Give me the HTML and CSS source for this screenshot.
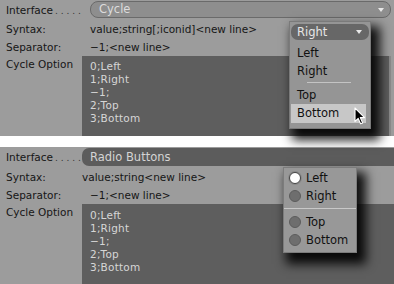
FILE: index.html
```html
<!DOCTYPE html>
<html lang="en">
<head>
<meta charset="utf-8"/>
<title>Cycle Interface</title>
<link rel="stylesheet" href="styles.css">
</head>
<body>
<div class="panel panel-top">
  <div class="row row-interface">
    <div class="label">Interface<span class="dots">. . . . .</span></div>
    <div class="dropdown">Cycle<span class="arrow"></span></div>
  </div>
  <div class="row row-syntax">
    <div class="label">Syntax:</div>
    <div class="value indent">value;string[;iconid]&lt;new line&gt;</div>
  </div>
  <div class="row row-sep">
    <div class="label">Separator:</div>
    <div class="value indent">&minus;1;&lt;new line&gt;</div>
  </div>
  <div class="row row-option">
    <div class="label">Cycle Option</div>
    <div class="textbox textbox-top">0;Left<br>1;Right<br>&minus;1;<br>2;Top<br>3;Bottom</div>
  </div>

  <div class="menu">
    <div class="menu-pill">Right<span class="arrow"></span></div>
    <div class="menu-item">Left</div>
    <div class="menu-item">Right</div>
    <div class="menu-sep"></div>
    <div class="menu-item">Top</div>
    <div class="menu-item menu-item-active">Bottom</div>
    <svg class="cursor" width="12" height="18" viewBox="0 0 12 18">
      <path d="M1 1 L1 14.5 L4.2 11.4 L6.6 16.8 L8.6 15.9 L6.3 10.6 L10.6 10.6 Z" fill="#000" stroke="#fff" stroke-width="1.1" stroke-linejoin="round"/>
    </svg>
  </div>
</div>

<div class="panel panel-bottom">
  <div class="row row-interface-b">
    <div class="label">Interface<span class="dots">. . . . .</span></div>
    <div class="dropdown-dark">Radio Buttons</div>
  </div>
  <div class="row row-syntax">
    <div class="label">Syntax:</div>
    <div class="value">value;string&lt;new line&gt;</div>
  </div>
  <div class="row row-sep">
    <div class="label">Separator:</div>
    <div class="value indent">&minus;1;&lt;new line&gt;</div>
  </div>
  <div class="row row-option">
    <div class="label">Cycle Option</div>
    <div class="textbox textbox-bottom">0;Left<br>1;Right<br>&minus;1;<br>2;Top<br>3;Bottom</div>
  </div>

  <div class="radio-menu">
    <div class="radio-item"><span class="radio radio-on"></span>Left</div>
    <div class="radio-item"><span class="radio"></span>Right</div>
    <div class="radio-sep"></div>
    <div class="radio-item"><span class="radio"></span>Top</div>
    <div class="radio-item"><span class="radio"></span>Bottom</div>
  </div>
</div>
</body>
</html>
```

FILE: styles.css
```css
body {
  margin: 0;
  background: #fff;
  font-family: "DejaVu Sans", sans-serif;
  font-size: 10.5px;
  color: #161616;
}
.panel {
  position: relative;
  background: #9c9c9c;
}
.panel-top {
  height: 136px;
  z-index: 2;
}
.panel-bottom {
  height: 137px;
  margin-top: 11px;
  overflow: hidden;
}
.row {
  display: grid;
  grid-template-columns: 82px 1fr;
  align-items: center;
}
.label {
  padding-left: 6px;
  white-space: nowrap;
}
.dots {
  font-size: 9px;
  margin-left: 2px;
  color: #333;
}
.value {
  white-space: nowrap;
}
.indent {
  padding-left: 8px;
}

/* top panel rows */
.row-interface {
  height: 19px;
}
.row-syntax {
  height: 19px;
}
.row-sep {
  height: 18px;
}
.row-option {
  align-items: start;
}
.row-option .label {
  padding-top: 2px;
}
.dropdown {
  position: relative;
  height: 15px;
  line-height: 15px;
  margin: 0 3px 0 8px;
  padding-left: 8px;
  background: #8e8e8e;
  border: 1px solid #6a6a6a;
  border-radius: 8px;
  color: #dcdcdc;
  font-size: 11.5px;
}
.arrow {
  position: absolute;
  right: 6px;
  top: 6px;
  width: 0;
  height: 0;
  border-left: 3.5px solid transparent;
  border-right: 3.5px solid transparent;
  border-top: 4px solid #e8e8e8;
}
.textbox {
  height: 80px;
  box-sizing: border-box;
  padding: 4px 8px;
  background: #5e5e5e;
  color: #d6d6d6;
  line-height: 13px;
  letter-spacing: 0.2px;
}
.textbox-top {
  margin-right: 3px;
  border-right: 2px solid #8a8a8a;
}
.textbox-bottom {
  padding-top: 5px;
}

/* bottom panel rows */
.row-interface-b {
  height: 20px;
}
.dropdown-dark {
  height: 18px;
  line-height: 18px;
  padding-left: 8px;
  background: #5c5c5c;
  border-radius: 7px 0 0 7px;
  color: #d4d4d4;
  font-size: 11.5px;
}

/* popup menu over the cycle field */
.menu {
  position: absolute;
  left: 289px;
  top: 21px;
  width: 82px;
  box-sizing: border-box;
  padding: 2px 1px 5px;
  background: #959595;
  border: 1px solid #7a7a7a;
  box-shadow: 6px 8px 10px 3px rgba(0, 0, 0, 0.9);
  font-size: 11.5px;
}
.menu-pill {
  position: relative;
  height: 16px;
  line-height: 16px;
  padding-left: 6px;
  margin-bottom: 4px;
  background: #676767;
  border-radius: 7px;
  color: #e6e6e6;
}
.menu-pill .arrow {
  right: 7px;
}
.menu-item {
  height: 18px;
  line-height: 18px;
  padding-left: 6px;
  color: #111;
}
.menu-item-active {
  height: 19px;
  line-height: 19px;
  margin-right: 3px;
  background: #c7c7c7;
}
.menu-sep {
  height: 6px;
  margin: 0 18px 0 16px;
  background: linear-gradient(#959595 2px, #c4c4c4 2px, #c4c4c4 3px, #959595 3px);
}
.cursor {
  position: absolute;
  left: 64px;
  top: 85px;
}

/* radio popup */
.radio-menu {
  position: absolute;
  left: 283px;
  top: 20px;
  width: 74px;
  box-sizing: border-box;
  padding: 1px 0 3px;
  background: #989898;
  border: 1px solid #7c7c7c;
  box-shadow: 6px 8px 10px 3px rgba(0, 0, 0, 0.9);
  font-size: 11.5px;
}
.radio-item {
  display: flex;
  align-items: center;
  gap: 5px;
  height: 18px;
  padding-left: 5px;
  color: #111;
}
.radio {
  width: 10px;
  height: 10px;
  border-radius: 50%;
  background: #6e6e6e;
  border: 1px solid #5c5c5c;
}
.radio-on {
  background: #fff;
  border-color: #444;
  box-shadow: 0 0 0 1px #888;
}
.radio-sep {
  height: 8px;
  background: linear-gradient(#989898 3px, #c8c8c8 3px, #c8c8c8 4px, #989898 4px);
}
```
